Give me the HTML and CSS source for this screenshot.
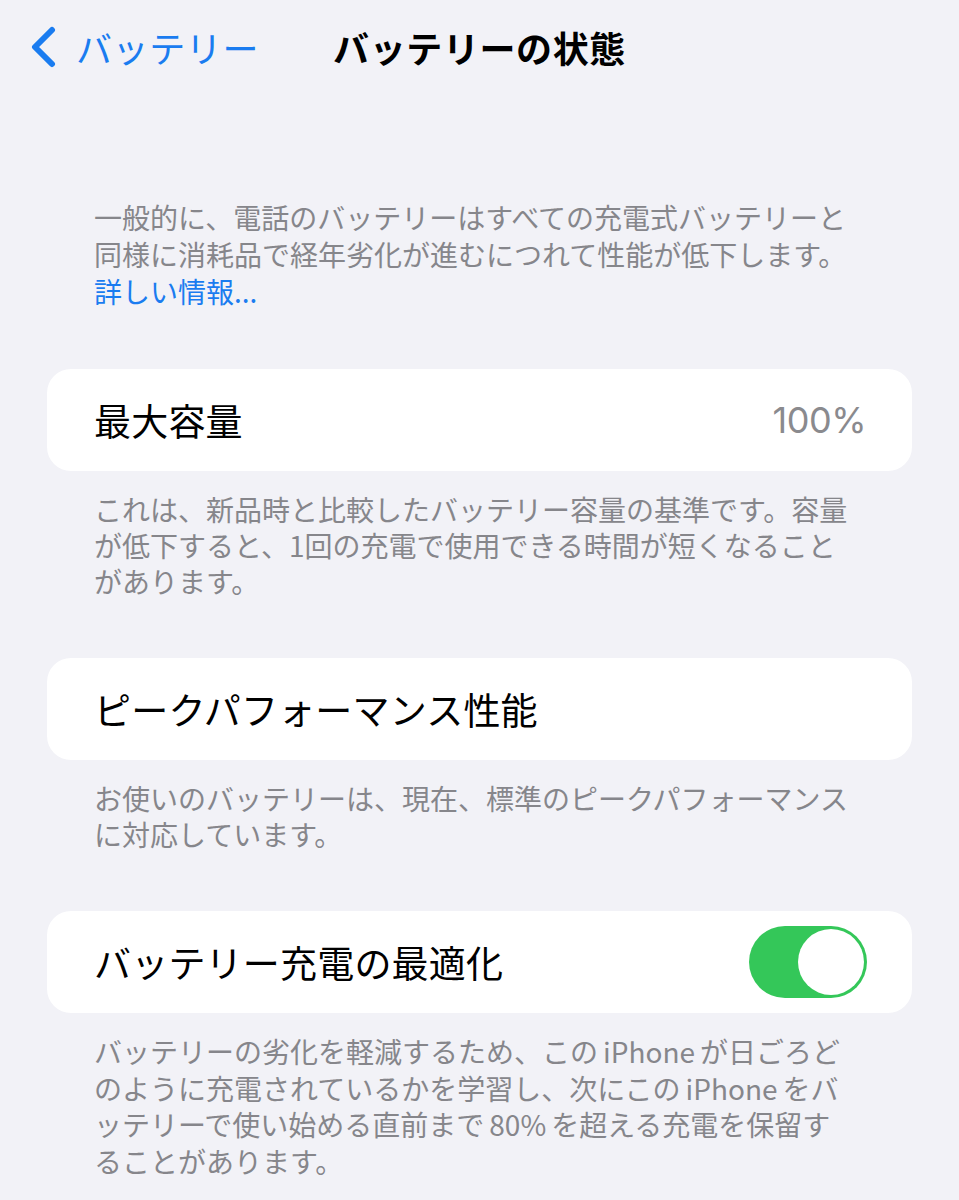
FILE: index.html
```html
<!DOCTYPE html>
<html lang="ja">
<head>
<meta charset="utf-8">
<link rel="stylesheet" href="styles.css">
</head>
<body>
<div class="screen">
  <header class="nav">
    <div class="back">
      <svg class="chev" width="30" height="42" viewBox="0 0 30 42"><path d="M24 4 L7 21 L24 38" fill="none" stroke="#1a7cf0" stroke-width="6" stroke-linecap="round" stroke-linejoin="round"/></svg>
      <span class="back-text">バッテリー</span>
    </div>
    <h1 class="title">バッテリーの状態</h1>
  </header>

  <p class="intro">一般的に、電話のバッテリーはすべての充電式バッテリーと<br>同様に消耗品で経年劣化が進むにつれて性能が低下します。<br><span class="link">詳しい情報...</span></p>

  <div class="card">
    <span class="label">最大容量</span>
    <span class="value">100%</span>
  </div>
  <p class="foot">これは、新品時と比較したバッテリー容量の基準です。容量<br>が低下すると、1回の充電で使用できる時間が短くなること<br>があります。</p>

  <div class="card">
    <span class="label">ピークパフォーマンス性能</span>
  </div>
  <p class="foot">お使いのバッテリーは、現在、標準のピークパフォーマンス<br>に対応しています。</p>

  <div class="card">
    <span class="label">バッテリー充電の最適化</span>
    <span class="toggle"><span class="knob"></span></span>
  </div>
  <p class="foot foot3">バッテリーの劣化を軽減するため、この<span class="lat">iPhone</span>が日ごろど<br>のように充電されているかを学習し、次にこの<span class="lat">iPhone</span>をバ<br>ッテリーで使い始める直前まで<span class="lat">80%</span>を超える充電を保留す<br>ることがあります。</p>
</div>
</body>
</html>
```

FILE: styles.css
```css
html, body {
  margin: 0;
  padding: 0;
  background: #f2f2f7;
}
body {
  font-family: "Noto Sans CJK JP", "Noto Sans", sans-serif;
  color: #000;
}
.screen {
  width: 959px;
  height: 1200px;
  overflow: hidden;
  display: flex;
  flex-direction: column;
}
.nav {
  position: relative;
  height: 96px;
  display: flex;
  align-items: center;
  justify-content: center;
}
.back {
  position: absolute;
  left: 28px;
  top: 26px;
  display: flex;
  align-items: center;
  gap: 18px;
}
.chev { display: block; }
.back-text {
  color: #1a7cf0;
  font-size: 36px;
  line-height: 42px;
  letter-spacing: 0.6px;
}
.title {
  margin: 0;
  margin-top: -2px;
  font-size: 36px;
  font-weight: 700;
  line-height: 42px;
  letter-spacing: 0.6px;
}
.intro {
  margin: 103px 0 0 94px;
  font-size: 28px;
  line-height: 37px;
  color: #86868b;
  white-space: nowrap;
}
.link { color: #1a7cf0; }
.card {
  margin: 59px 47px 0 47px;
  height: 102px;
  background: #fff;
  border-radius: 24px;
  display: flex;
  align-items: center;
  justify-content: space-between;
  padding: 0 46px 0 47px;
}
.label {
  font-size: 37px;
  line-height: 44px;
  letter-spacing: 0.2px;
}
.value {
  font-size: 36px;
  color: #8a8a8e;
  font-family: "Inter", "Noto Sans", sans-serif;
  font-weight: 400;
  letter-spacing: -0.5px;
}
.toggle {
  width: 118px;
  height: 72px;
  border-radius: 36px;
  background: #34c759;
  display: flex;
  align-items: center;
  justify-content: flex-end;
  padding: 0 3px;
  box-sizing: border-box;
  margin-right: -1px;
}
.knob {
  width: 66px;
  height: 66px;
  border-radius: 50%;
  background: #fff;
}
.foot {
  margin: 20px 0 0 94px;
  font-size: 28px;
  line-height: 36px;
  color: #86868b;
  white-space: nowrap;
}
.foot3 { line-height: 36.5px; }
.lat {
  margin: 0 5px;
}
```
